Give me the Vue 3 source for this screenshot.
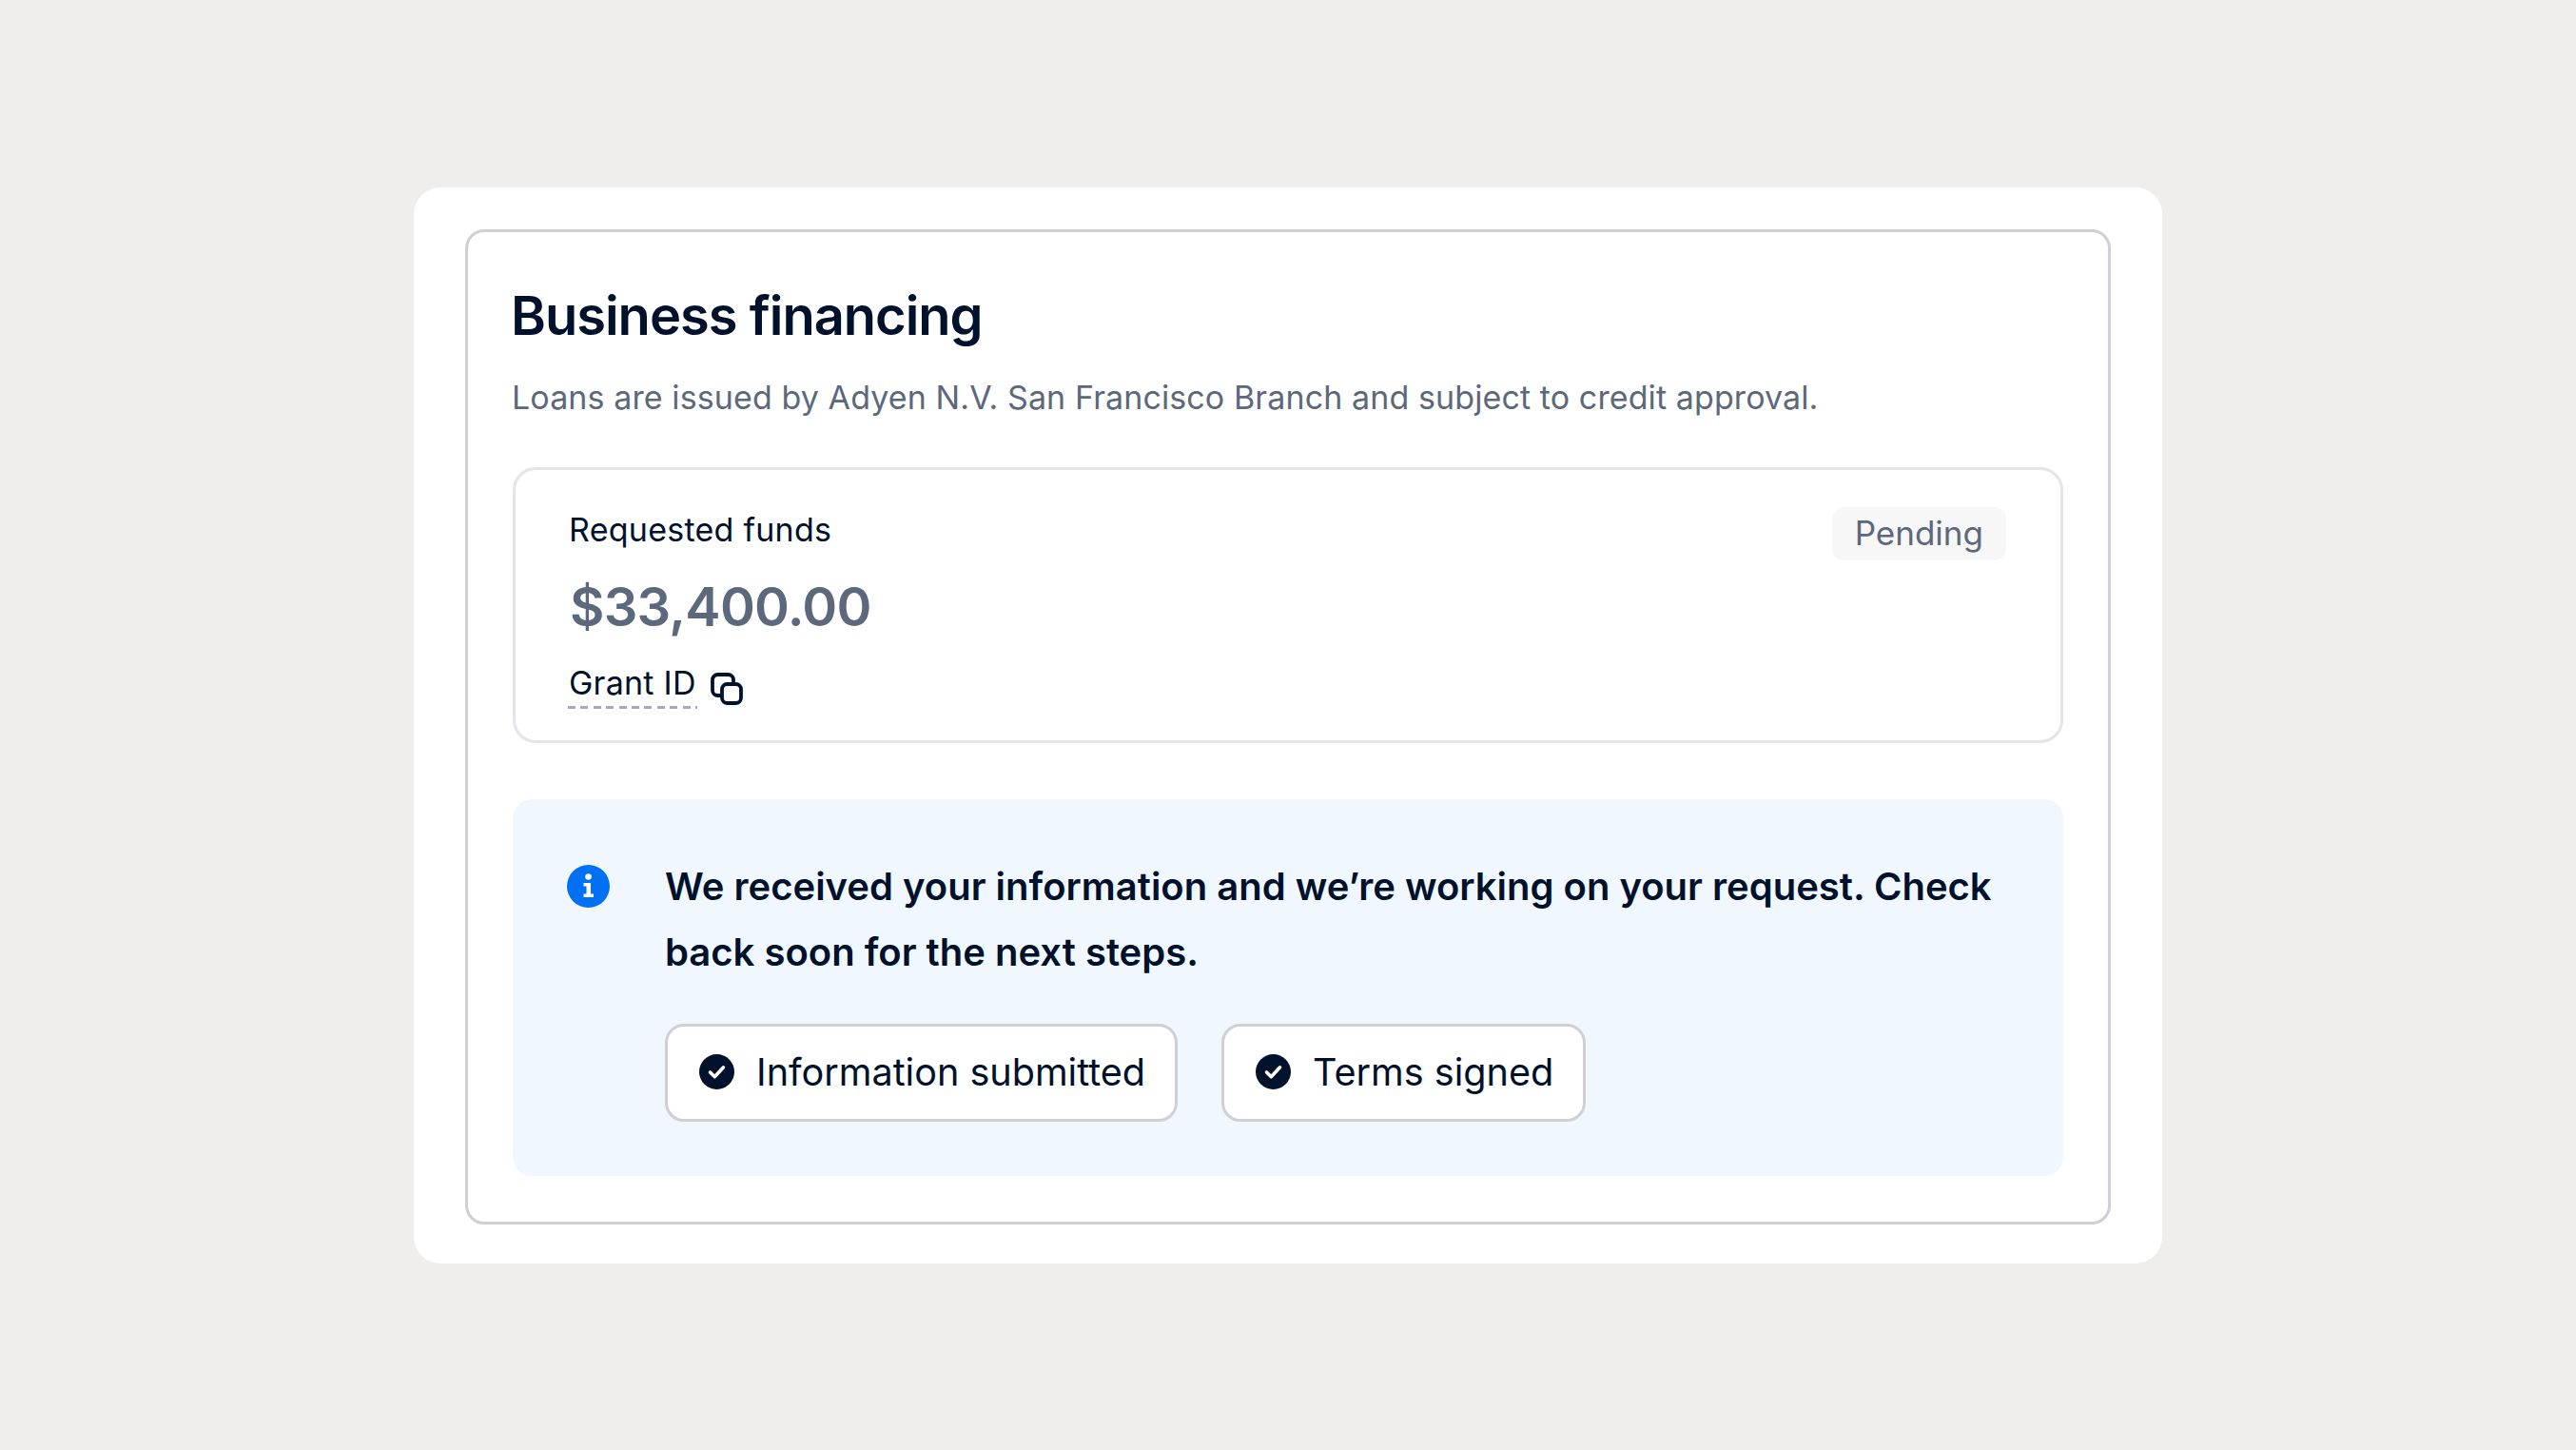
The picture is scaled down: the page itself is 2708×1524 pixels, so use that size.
<template>
  <main class="page">
    <section class="sheet">
      <div class="panel">
        <h1 class="title">Business financing</h1>
        <p class="subtitle">Loans are issued by Adyen N.V. San Francisco Branch and subject to credit approval.</p>

        <div class="funds">
          <div class="funds-main">
            <div class="funds-label">Requested funds</div>
            <div class="funds-amount">$33,400.00</div>
            <div class="grant">
              <span class="grant-label">Grant ID</span>
              <svg class="copy-icon" viewBox="0 0 34 34" fill="none" stroke="#00112c" stroke-width="3.8" aria-hidden="true">
                <path d="M11 24H7.5A5.5 5.5 0 0 1 2 18.500V7.500A5.500 5.500 0 0 1 7.500 2H18.500A5.500 5.500 0 0 1 24 7.500V11" stroke-linecap="round" />
                <rect x="12" y="12" width="20" height="20" rx="5.500" />
              </svg>
            </div>
          </div>
          <span class="badge">Pending</span>
        </div>

        <div class="notice">
          <svg class="info-icon" viewBox="0 0 45 45" aria-hidden="true">
            <circle cx="22.500" cy="22.500" r="22.500" fill="#0070f5" />
            <circle cx="22.500" cy="12.500" r="3.300" fill="#fff" />
            <path d="M17.500 19H25V30.500H28V34H17.500V30.500H20.500V22.500H17.500Z" fill="#fff" />
          </svg>
          <div class="notice-body">
            <p class="notice-text">We received your information and we’re working on your request. Check back soon for the next steps.</p>
            <div class="steps">
              <div v-for="step in steps" :key="step" class="step">
                <svg class="check-icon" viewBox="0 0 37 37" aria-hidden="true">
                  <circle cx="18.500" cy="18.500" r="18.500" fill="#00112c" />
                  <path d="M11.500 19L16.300 23.800L25.500 13.800" fill="none" stroke="#fff" stroke-width="3.600" stroke-linecap="round" stroke-linejoin="round" />
                </svg>
                <span>{{ step }}</span>
              </div>
            </div>
          </div>
        </div>
      </div>
    </section>
  </main>
</template>

<script setup>
const steps = ['Information submitted', 'Terms signed']
</script>

<style>
html,
body {
  margin: 0;
  background: #efeeec;
}
</style>

<style scoped>
.page {
  display: flex;
  align-items: center;
  justify-content: center;
  height: 1524px;
  background: #efeeec;
  font-family: Inter, "Liberation Sans", sans-serif;
  color: #00112c;
}

.sheet {
  box-sizing: border-box;
  width: 1838px;
  height: 1131px;
  padding: 44px 54px 41px 54px;
  background: #fff;
  border-radius: 28px;
}

.panel {
  box-sizing: border-box;
  height: 100%;
  padding: 52px 47px 46px 47px;
  border: 3px solid #ced0d5;
  border-radius: 20px;
}

.title {
  margin: 0 0 0 -2px;
  font-size: 56px;
  font-weight: 600;
  line-height: 72px;
  letter-spacing: -1px;
}

.subtitle {
  margin: 22px 0 0 -1px;
  font-size: 34px;
  font-weight: 400;
  line-height: 56px;
  letter-spacing: 0.1px;
  color: #5c687c;
}

.funds {
  box-sizing: border-box;
  display: flex;
  justify-content: space-between;
  align-items: flex-start;
  height: 290px;
  margin-top: 45px;
  padding: 39px 57px 0 56px;
  border: 3px solid #e3e5e8;
  border-radius: 24px;
}

.funds-label {
  font-size: 34px;
  line-height: 48px;
  letter-spacing: 0.25px;
}

.funds-amount {
  margin: 21px 0 0 1px;
  font-size: 56px;
  font-weight: 600;
  line-height: 72px;
  letter-spacing: -0.75px;
  color: #5c687c;
}

.grant {
  display: flex;
  align-items: flex-start;
  gap: 14px;
  margin-top: 20px;
}

.grant-label {
  margin-left: -1px;
  padding: 0 1px 3px;
  font-size: 34px;
  line-height: 48px;
  letter-spacing: 0.25px;
  background: repeating-linear-gradient(90deg, #a6abb5 0 8px, transparent 8px 13.4px) left bottom / 100% 3px no-repeat;
}

.copy-icon {
  width: 34px;
  height: 34px;
  margin-top: 13px;
}

.badge {
  padding: 0 24px 2px;
  height: 54px;
  font-size: 35px;
  line-height: 54px;
  color: #5c687c;
  background: #f7f7f8;
  border-radius: 12px;
}

.notice {
  box-sizing: border-box;
  display: flex;
  align-items: flex-start;
  gap: 58px;
  height: 396px;
  margin-top: 59px;
  padding: 69px 58px 0 57px;
  background: #f1f7ff;
  border-radius: 20px;
}

.info-icon {
  flex: none;
  width: 45px;
  height: 45px;
}

.notice-body {
  flex: 1;
  margin-top: -12px;
}

.notice-text {
  margin: 0;
  font-size: 40px;
  font-weight: 600;
  line-height: 69px;
}

.steps {
  display: flex;
  gap: 46px;
  margin-top: 41px;
}

.step {
  box-sizing: border-box;
  display: flex;
  align-items: center;
  gap: 23px;
  height: 103px;
  padding: 0 31px 0 33px;
  font-size: 39.6px;
  background: #fff;
  border: 3px solid #ced0d5;
  border-radius: 20px;
}

.check-icon {
  width: 37px;
  height: 37px;
  margin-top: -2px;
}
</style>
